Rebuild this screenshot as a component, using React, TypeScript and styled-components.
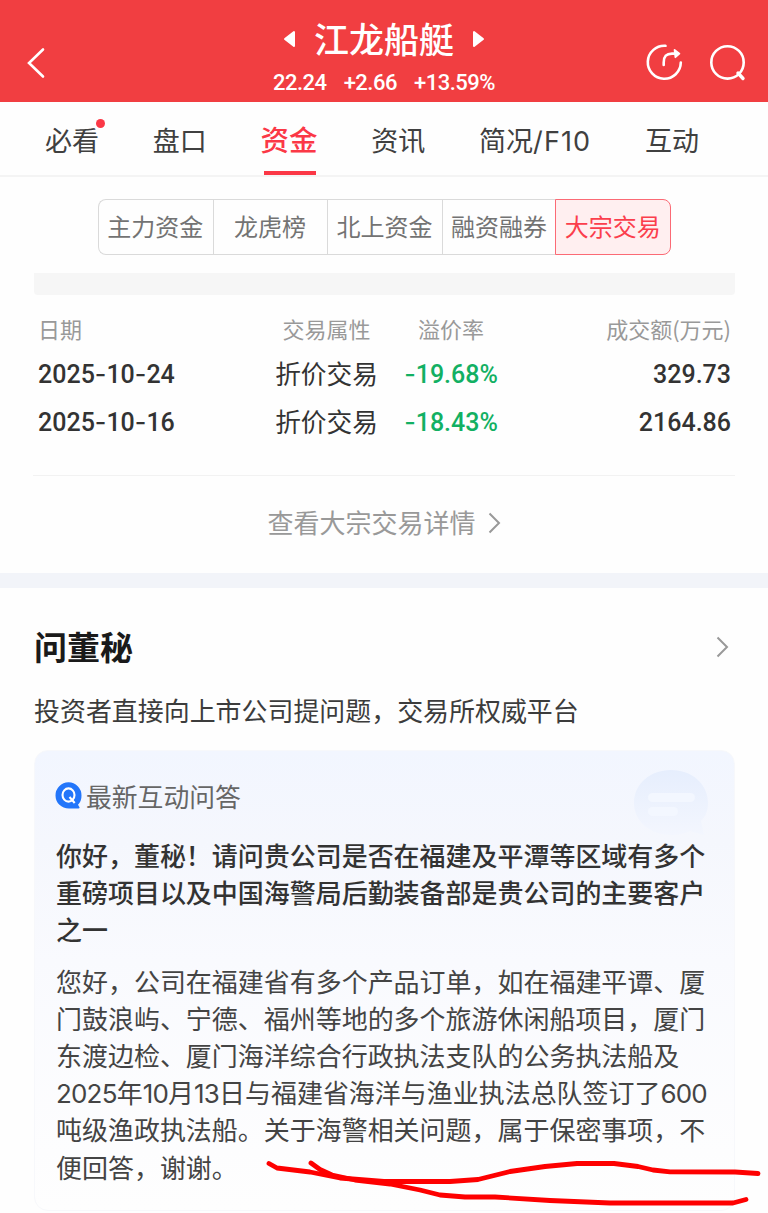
import React from "react";
import styled, { createGlobalStyle } from "styled-components";

const cjk = `"Noto Sans CJK SC", sans-serif`;
const mixed = `Inter, "Noto Sans CJK SC", sans-serif`;
const figures = `Roboto, "Noto Sans CJK SC", sans-serif`;

const GlobalStyle = createGlobalStyle`
  * { box-sizing: border-box; }
  body { margin: 0; background: #fefefe; font-family: ${cjk}; color: #333; }
`;

const Screen = styled.div`
  position: relative;
  width: 768px;
  height: 1213px;
  overflow: hidden;
  display: flex;
  flex-direction: column;
  background: #fefefe;
  white-space: nowrap;
`;

const Header = styled.header`
  flex: none;
  height: 102px;
  display: grid;
  grid-template-columns: 150px 1fr 150px;
  background: #f13e41;
  color: #fff;
`;

const HeaderSide = styled.div<{ $end?: boolean }>`
  display: flex;
  align-items: center;
  justify-content: ${(p) => (p.$end ? "flex-end" : "flex-start")};
  gap: 25px;
  padding: ${(p) => (p.$end ? "20px 21px 0 26px" : "22px 21px 0 26px")};
`;

const Quote = styled.div`
  display: flex;
  flex-direction: column;
  align-items: center;
  padding-top: 15px;
`;

const StockRow = styled.div`
  display: flex;
  align-items: center;
  gap: 18px;
  height: 46px;
  svg { margin-top: 2px; }
`;

const StockName = styled.h1`
  margin: 0;
  font-size: 35px;
  line-height: 46px;
  font-weight: 500;
`;

const PriceRow = styled.div`
  display: flex;
  gap: 17px;
  height: 40px;
  margin-top: 2px;
  font: 500 22px/40px ${figures};
  letter-spacing: -0.5px;
`;

const Tabs = styled.nav`
  flex: none;
  height: 75px;
  display: flex;
  align-items: stretch;
  padding: 0 69px 0 45px;
  justify-content: space-between;
  border-bottom: 2px solid #f4f4f4;
`;

const Tab = styled.a<{ $active?: boolean }>`
  position: relative;
  display: flex;
  font-family: ${mixed};
  font-size: ${(p) => (p.$active ? "28.5px" : "27px")};
  font-weight: ${(p) => (p.$active ? 500 : 400)};
  line-height: ${(p) => (p.$active ? "78px" : "79px")};
  color: ${(p) => (p.$active ? "#fb3846" : "#404040")};
  &::after {
    content: "";
    display: ${(p) => (p.$active ? "block" : "none")};
    position: absolute;
    left: 3px;
    right: 2px;
    bottom: 0;
    height: 4px;
    background: #fb3846;
  }
`;

const Latin = styled.span`
  letter-spacing: 1.1px;
`;

const Dot = styled.i`
  position: absolute;
  top: 17px;
  right: -6px;
  width: 9px;
  height: 9px;
  border-radius: 50%;
  background: #fb3846;
`;

const Segments = styled.div`
  flex: none;
  display: flex;
  width: 573px;
  height: 56px;
  margin: 22px 0 0 98px;
`;

const Segment = styled.div<{ $active?: boolean }>`
  flex: 1;
  margin-left: ${(p) => (p.$active ? "-1px" : "0")};
  padding: 0 1px 3px 0;
  display: flex;
  align-items: center;
  justify-content: center;
  font-size: 24px;
  color: ${(p) => (p.$active ? "#fb3e4c" : "#737373")};
  background: ${(p) => (p.$active ? "#ffeff0" : "#fefefe")};
  border: 1.5px solid ${(p) => (p.$active ? "#fb6a75" : "#dadada")};
  border-right-width: ${(p) => (p.$active ? "1.5px" : "0")};
  &:first-child { border-radius: 8px 0 0 8px; }
  &:last-child { border-radius: 0 8px 8px 0; }
`;

const Placeholder = styled.div`
  flex: none;
  height: 22px;
  margin: 18px 33px 0 34px;
  border-radius: 0 0 4px 4px;
  background: #f6f6f6;
`;

const Table = styled.section`
  flex: none;
  height: 181px;
  margin: 0 33px;
  padding: 11px 4px 0 5px;
  border-bottom: 1px solid #f2f2f2;
`;

const TableRow = styled.div<{ $head?: boolean }>`
  display: grid;
  grid-template-columns: 210px 157px 92px 1fr;
  height: ${(p) => (p.$head ? "43px" : "48px")};
  line-height: ${(p) => (p.$head ? "44px" : "48px")};
  font-size: ${(p) => (p.$head ? "22px" : "25.7px")};
  color: ${(p) => (p.$head ? "#999" : "#333")};
`;

const Cell = styled.div<{ $align?: string }>`
  display: flex;
  justify-content: ${(p) => p.$align || "flex-start"};
`;

const Figure = styled.span<{ $tone?: string; $plain?: boolean }>`
  padding-top: ${(p) => (p.$plain ? "2px" : "1px")};
  font-family: ${figures};
  font-size: 25px;
  font-weight: 500;
  color: ${(p) => p.$tone || "#333"};
`;

const Dash = styled.span`
  font-family: Inter, sans-serif;
`;

const MoreLink = styled.a`
  flex: none;
  height: 97px;
  padding: 0 0 4px;
  display: flex;
  align-items: center;
  justify-content: center;
  gap: 12px;
  font-size: 26px;
  line-height: 36px;
  color: #999;
`;

const MoreText = styled.span`
  padding-bottom: 2px;
`;

const Band = styled.div`
  flex: none;
  height: 15px;
  background: #f2f4f9;
`;

const Section = styled.section`
  flex: none;
  padding: 31px 33px 0 34px;
`;

const SectionHead = styled.div`
  display: flex;
  align-items: center;
  justify-content: space-between;
  height: 56px;
  padding-right: 6px;
`;

const SectionTitle = styled.h2`
  margin: 0;
  font-size: 33px;
  line-height: 54px;
  padding-bottom: 2px;
  font-weight: 700;
  color: #1a1a1a;
`;

const Lead = styled.p`
  margin: 14px 0 20px;
  font-size: 25.95px;
  line-height: 41px;
  color: #3c3c3c;
`;

const Card = styled.article`
  position: relative;
  height: 461px;
  padding: 26px 21px 0;
  border: 1px solid #f7f8fb;
  border-radius: 14px;
  background: linear-gradient(180deg, #f2f6ff 0, #f5f7fd 90px, #f9fafe 210px, #fdfdfe 400px, #fefefe 100%);
`;

const CardHead = styled.div`
  display: flex;
  align-items: center;
  gap: 4px;
  height: 38px;
  font-size: 25.8px;
  line-height: 38px;
  color: #666;
`;

const QuestionBadge = styled.svg`
  flex: none;
  margin: 0 0 1px -1px;
`;

const BubbleMark = styled.svg`
  position: absolute;
  top: 19px;
  right: 25px;
`;

const Paragraph = styled.p<{ $strong?: boolean }>`
  position: relative;
  margin: ${(p) => (p.$strong ? "23px 0 0" : "14px 0 0")};
  font-family: ${mixed};
  font-size: 25.97px;
  line-height: 37.2px;
  font-weight: ${(p) => (p.$strong ? 500 : 400)};
  color: ${(p) => (p.$strong ? "#333" : "#444")};
`;

const Line = styled.span`
  display: block;
`;

const Num = styled.span`
  letter-spacing: -0.8px;
`;

const Marker = styled.svg`
  position: absolute;
  left: 0;
  bottom: 0;
  pointer-events: none;
`;

const Chevron = ({ color = "#999" }: { color?: string }) => (
  <svg width="13" height="22" viewBox="0 0 13 22" fill="none" stroke={color} strokeWidth="2">
    <path d="M1.5 1.5 11 11l-9.5 9.5" />
  </svg>
);

const trades = [
  { date: "2025-10-24", kind: "折价交易", rate: "-19.68%", amount: "329.73" },
  { date: "2025-10-16", kind: "折价交易", rate: "-18.43%", amount: "2164.86" },
];

const question = [
  "你好，董秘！请问贵公司是否在福建及平潭等区域有多个",
  "重磅项目以及中国海警局后勤装备部是贵公司的主要客户",
  "之一",
];

const answer = [
  "您好，公司在福建省有多个产品订单，如在福建平谭、厦",
  "门鼓浪屿、宁德、福州等地的多个旅游休闲船项目，厦门",
  "东渡边检、厦门海洋综合行政执法支队的公务执法船及",
  "2025年10月13日与福建省海洋与渔业执法总队签订了600",
  "吨级渔政执法船。关于海警相关问题，属于保密事项，不",
  "便回答，谢谢。",
];

const withNumbers = (text: string) =>
  text.split(/(\d+)/).map((part, i) => (/^\d/.test(part) ? <Num key={i}>{part}</Num> : part));

const withDashes = (text: string) =>
  text.split(/(-)/).map((part, i) => (part === "-" ? <Dash key={i}>-</Dash> : part));

export default function App() {
  return (
    <Screen>
      <GlobalStyle />
      <Header>
        <HeaderSide>
          <svg width="20" height="32" viewBox="0 0 20 32" fill="none" stroke="#fff" strokeWidth="2.6" strokeLinecap="round">
            <path d="M17 2.5 3 16l14 13.5" />
          </svg>
        </HeaderSide>
        <Quote>
          <StockRow>
            <svg width="13" height="18" viewBox="0 0 13 18">
              <path d="M11 2v14L2 9z" fill="#fff" stroke="#fff" strokeWidth="2" strokeLinejoin="round" />
            </svg>
            <StockName>江龙船艇</StockName>
            <svg width="13" height="18" viewBox="0 0 13 18">
              <path d="M2 2v14l9-7z" fill="#fff" stroke="#fff" strokeWidth="2" strokeLinejoin="round" />
            </svg>
          </StockRow>
          <PriceRow>
            <span>22.24</span>
            <span>+2.66</span>
            <span>+13.59%</span>
          </PriceRow>
        </Quote>
        <HeaderSide $end>
          <svg width="38" height="38" viewBox="0 0 38 38" fill="none" stroke="#fff" strokeWidth="2.6" strokeLinecap="round" strokeLinejoin="round">
            <path d="M19.5 2.8A16.5 16.5 0 1 0 34.8 19.5" />
            <path d="M17.7 22V19.500C17.700 13 20.500 10.600 26 10.600H32" />
            <path d="M28.600 6.900 33.400 10.600 29.400 14.200z" fill="#fff" strokeWidth="1.800" />
          </svg>
          <svg width="38" height="38" viewBox="0 0 38 38" fill="none" stroke="#fff" strokeWidth="2.6" strokeLinecap="round">
            <circle cx="18.5" cy="19.400" r="16.200" />
            <path d="M29 30 34 35.500" strokeWidth="3.400" />
          </svg>
        </HeaderSide>
      </Header>

      <Tabs>
        <Tab>必看<Dot /></Tab>
        <Tab>盘口</Tab>
        <Tab $active>资金</Tab>
        <Tab>资讯</Tab>
        <Tab>简况<Latin>/F10</Latin></Tab>
        <Tab>互动</Tab>
      </Tabs>

      <Segments>
        <Segment>主力资金</Segment>
        <Segment>龙虎榜</Segment>
        <Segment>北上资金</Segment>
        <Segment>融资融券</Segment>
        <Segment $active>大宗交易</Segment>
      </Segments>

      <Placeholder />

      <Table>
        <TableRow $head>
          <Cell>日期</Cell>
          <Cell $align="center">交易属性</Cell>
          <Cell $align="center">溢价率</Cell>
          <Cell $align="flex-end">成交额(万元)</Cell>
        </TableRow>
        {trades.map((t) => (
          <TableRow key={t.date}>
            <Cell><Figure>{withDashes(t.date)}</Figure></Cell>
            <Cell $align="center">{t.kind}</Cell>
            <Cell $align="center"><Figure $tone="#12b063">{withDashes(t.rate)}</Figure></Cell>
            <Cell $align="flex-end"><Figure $plain>{t.amount}</Figure></Cell>
          </TableRow>
        ))}
      </Table>

      <MoreLink>
        <MoreText>查看大宗交易详情</MoreText>
        <Chevron />
      </MoreLink>

      <Band />

      <Section>
        <SectionHead>
          <SectionTitle>问董秘</SectionTitle>
          <Chevron />
        </SectionHead>
        <Lead>投资者直接向上市公司提问题，交易所权威平台</Lead>
        <Card>
          <BubbleMark width="76" height="66" viewBox="0 0 76 66">
            <defs>
              <linearGradient id="bubble" x1="0" y1="0" x2="0" y2="1">
                <stop offset="0" stopColor="#e6eefd" />
                <stop offset="1" stopColor="#f3f6fe" />
              </linearGradient>
            </defs>
            <path d="M38 0C17 0 1 14 1 33c0 18 16 32 37 32 9 0 14-2 19-4l14 4-3-14c5-5 7-11 7-18C75 14 59 0 38 0z" fill="url(#bubble)" />
            <rect x="15" y="23" width="47" height="9" rx="4.5" fill="#f3f7ff" />
            <rect x="15" y="37" width="30" height="9" rx="4.5" fill="#f3f7ff" />
          </BubbleMark>
          <CardHead>
            <QuestionBadge width="27" height="27" viewBox="0 0 27 27">
              <path d="M13.500 .3A13 13 0 0 0 .5 13.500C.5 21 6.500 26.500 14 26.500H23.500c1 0 1.300-.8.800-1.500l-1.300-2.200A13.200 13.200 0 0 0 26.500 13.500 13 13 0 0 0 13.500 .3z" fill="#2376fa" />
              <ellipse cx="13.500" cy="13" rx="6" ry="6.600" fill="none" stroke="#fff" strokeWidth="2.100" />
              <path d="M14.500 15l5.200 6" stroke="#fff" strokeWidth="2.100" />
            </QuestionBadge>
            最新互动问答
          </CardHead>
          <Paragraph $strong>
            {question.map((l) => <Line key={l}>{l}</Line>)}
          </Paragraph>
          <Paragraph>
            {answer.map((l) => <Line key={l}>{withNumbers(l)}</Line>)}
          </Paragraph>
        </Card>
      </Section>

      <Marker width="768" height="63" viewBox="0 1150 768 63" fill="none" stroke="#fe0000" strokeWidth="4.8" strokeLinecap="round" strokeLinejoin="round">
        <path d="M269 1163.500 277 1168 310 1172 340 1178 384 1181.500H450L478 1179.500 510 1171.500 545 1166.500 577 1163.500H614L638 1166.500 653 1170 670 1171.800 735 1172 758 1173.500" />
        <path d="M311 1163 320 1169.500 332 1175 355 1180 390 1184 400 1186 420 1190 440 1195 465 1197H495L550 1200.500 610 1203H733L746 1199.500" />
      </Marker>
    </Screen>
  );
}
